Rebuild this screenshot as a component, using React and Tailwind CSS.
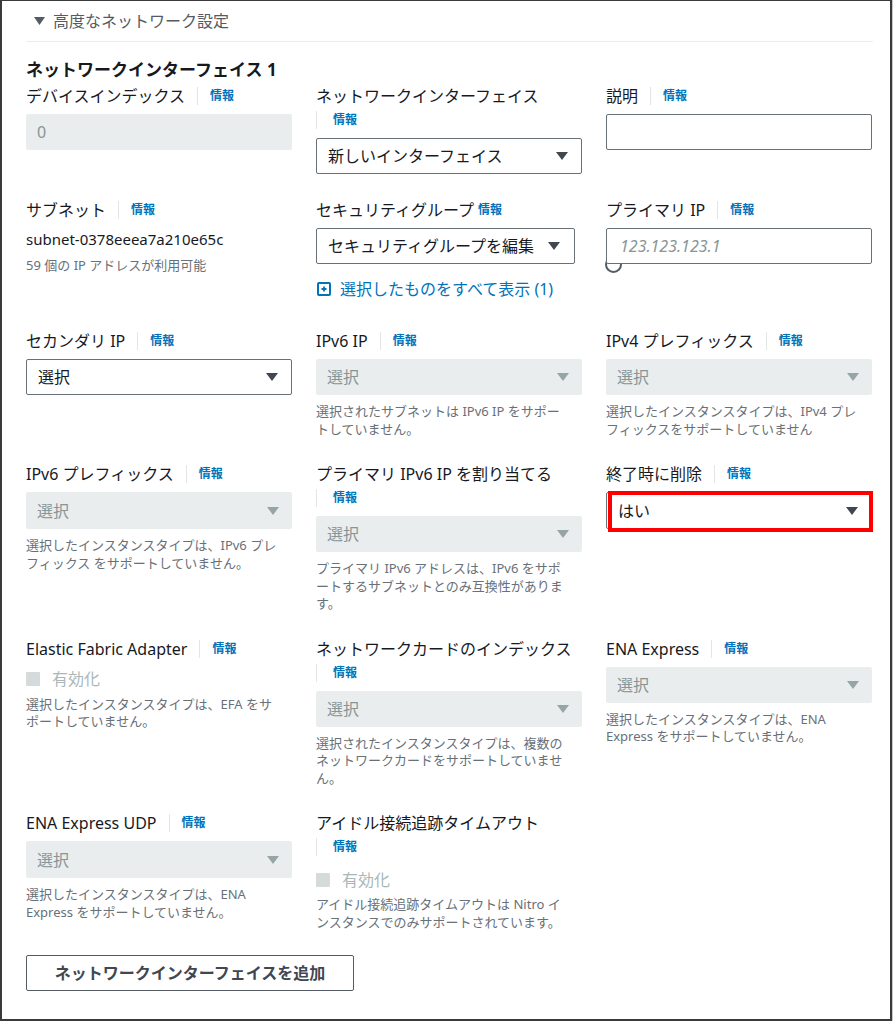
import React from "react";

const Tri = ({ disabled }) => (
  <svg width="12" height="8" viewBox="0 0 12 8" className="shrink-0">
    <path d="M0 0H12L6 8Z" fill={disabled ? "#95a5a6" : "#414750"} />
  </svg>
);

const Info = () => (
  <span className="text-[12px] font-bold text-[#0073bb] leading-6">情報</span>
);

const Divider = ({ cls = "mx-3" }) => (
  <span className={"inline-block w-px h-[18px] bg-[#e3e6e8] " + cls} />
);

const Label = ({ text, wrap, plain }) =>
  wrap ? (
    <div className="mb-1.5">
      <div className="h-6 leading-6 text-[16px] text-[#16191f] whitespace-nowrap">{text}</div>
      <div className="h-6 flex items-center">
        <Divider cls="mr-4" />
        <Info />
      </div>
    </div>
  ) : (
    <div className="h-6 mb-1.5 flex items-center text-[16px] text-[#16191f] whitespace-nowrap">
      <span>{text}</span>
      {plain ? <span className="ml-1 flex items-center"><Info /></span> : <><Divider /><Info /></>}
    </div>
  );

const Select = ({ value, disabled, className = "" }) => (
  <div
    className={
      "h-9 flex items-center justify-between pl-[11px] pr-[13px] rounded-[2px] text-[16px] " +
      (disabled
        ? "bg-[#eaeded] text-[#879596] "
        : "bg-white border border-[#687078] text-[#16191f] ") +
      className
    }
  >
    <span className="whitespace-nowrap">{value}</span>
    <Tri disabled={disabled} />
  </div>
);

const Desc = ({ lines, className = "mt-2" }) => (
  <div className={"text-[13px] leading-[17.5px] text-[#687078] " + className}>
    {lines.map((l, i) => (
      <div key={i} className="whitespace-nowrap">{l}</div>
    ))}
  </div>
);

const Check = ({ className = "mt-1.5" }) => (
  <div className={"h-6 flex items-center " + className}>
    <span className="w-[14px] h-[14px] bg-[#d5dbdb] rounded-[1px] mr-3" />
    <span className="text-[16px] text-[#aab7b8]">有効化</span>
  </div>
);

export default function App() {
  return (
    <div className="w-[893px] h-[1021px] bg-[#c8c8c8] font-['Noto_Sans','Noto_Sans_CJK_JP',sans-serif]">
      <div className="w-[892px] h-[1021px] bg-white border-l-2 border-r-2 border-t border-b-2 border-[#3a3a3a] pl-6 pr-[15px]">
        <div className="h-10 flex items-center pl-2 text-[16px] text-[#545b64]">
          <svg width="11" height="8" viewBox="0 0 11 8" className="mr-[8px]">
            <path d="M0 0H11L5.5 8Z" fill="#545b64" />
          </svg>
          <span>高度なネットワーク設定</span>
        </div>
        <div className="h-px bg-[#eaeded] w-[847px]" />
        <div className="mt-4 h-6 leading-6 text-[17px] font-bold text-[#16191f]">
          ネットワークインターフェイス 1
        </div>
        <div className="mt-[2px] grid grid-cols-[266px_266px_266px] gap-x-6 gap-y-6 items-start">
          {/* Row 1 */}
          <div>
            <Label text="デバイスインデックス" />
            <div className="h-9 flex items-center pl-[11px] bg-[#eaeded] rounded-[2px] text-[16px] text-[#879596]">0</div>
          </div>
          <div>
            <Label text="ネットワークインターフェイス" wrap />
            <Select value="新しいインターフェイス" />
          </div>
          <div>
            <Label text="説明" />
            <div className="h-9 bg-white border border-[#687078] rounded-[2px]" />
          </div>

          {/* Row 2 */}
          <div>
            <Label text="サブネット" />
            <div className="text-[15px] leading-[22px] text-[#16191f] mt-[2px]">subnet-0378eeea7a210e65c</div>
            <div className="text-[13px] leading-[18px] text-[#687078] mt-[6px]">59 個の IP アドレスが利用可能</div>
          </div>
          <div>
            <Label text="セキュリティグループ" plain />
            <Select value="セキュリティグループを編集" className="w-[259px] pr-[14px]" />
            <div className="mt-[13px] mb-1 h-6 flex items-center text-[16px] text-[#0073bb]">
              <svg width="14" height="14" viewBox="0 0 14 14" className="ml-px mr-[9px]">
                <rect x="1" y="1" width="12" height="12" rx="1" fill="none" stroke="#0073bb" strokeWidth="2" />
                <path d="M7 4.5V9.5M4.5 7H9.5" stroke="#0073bb" strokeWidth="1.8" />
              </svg>
              <span>選択したものをすべて表示 (1)</span>
            </div>
          </div>
          <div>
            <Label text="プライマリ IP" />
            <div className="relative">
              <span className="absolute left-[-1px] top-[28px] w-[17px] h-[17px] rounded-full border-2 border-[#545b64]" />
              <div className="relative h-9 flex items-center pl-[13px] bg-white border border-[#687078] rounded-[2px] text-[16px] italic text-[#879596]">
                123.123.123.1
              </div>
            </div>
          </div>

          {/* Row 3 */}
          <div>
            <Label text="セカンダリ IP" />
            <Select value="選択" />
          </div>
          <div>
            <Label text="IPv6 IP" />
            <Select value="選択" disabled />
            <Desc lines={["選択されたサブネットは IPv6 IP をサポー", "トしていません。"]} />
          </div>
          <div>
            <Label text="IPv4 プレフィックス" />
            <Select value="選択" disabled />
            <Desc lines={["選択したインスタンスタイプは、IPv4 プレ", "フィックスをサポートしていません"]} />
          </div>

          {/* Row 4 */}
          <div>
            <Label text="IPv6 プレフィックス" />
            <Select value="選択" disabled className="h-[37px]" />
            <Desc lines={["選択したインスタンスタイプは、IPv6 プレ", "フィックス をサポートしていません。"]} />
          </div>
          <div>
            <Label text="プライマリ IPv6 IP を割り当てる" wrap />
            <Select value="選択" disabled />
            <Desc lines={["プライマリ IPv6 アドレスは、IPv6 をサポ", "ートするサブネットとのみ互換性がありま", "す。"]} />
          </div>
          <div>
            <Label text="終了時に削除" />
            <div className="relative">
              <Select value="はい" className="h-[37px]" />
              <div className="absolute left-[2px] -top-[1px] -right-px -bottom-[3px] border-4 border-[#ff0000]" />
            </div>
          </div>

          {/* Row 5 */}
          <div>
            <Label text="Elastic Fabric Adapter" />
            <Check />
            <Desc lines={["選択したインスタンスタイプは、EFA をサ", "ポートしていません。"]} className="mt-[5px]" />
          </div>
          <div>
            <Label text="ネットワークカードのインデックス" wrap />
            <Select value="選択" disabled />
            <Desc lines={["選択されたインスタンスタイプは、複数の", "ネットワークカードをサポートしていませ", "ん。"]} />
          </div>
          <div>
            <Label text="ENA Express" />
            <Select value="選択" disabled />
            <Desc lines={["選択したインスタンスタイプは、ENA", "Express をサポートしていません。"]} />
          </div>

          {/* Row 6 */}
          <div>
            <Label text="ENA Express UDP" />
            <Select value="選択" disabled className="h-[37px]" />
            <Desc lines={["選択したインスタンスタイプは、ENA", "Express をサポートしていません。"]} />
          </div>
          <div>
            <Label text="アイドル接続追跡タイムアウト" wrap />
            <Check className="mt-[9px]" />
            <Desc lines={["アイドル接続追跡タイムアウトは Nitro イ", "ンスタンスでのみサポートされています。"]} className="mt-[4px]" />
          </div>
          <div />
        </div>
        <button className="mt-6 h-9 w-[328px] border border-[#545b64] rounded-[2px] bg-white text-[16px] font-bold text-[#414750]">
          ネットワークインターフェイスを追加
        </button>
      </div>
    </div>
  );
}
